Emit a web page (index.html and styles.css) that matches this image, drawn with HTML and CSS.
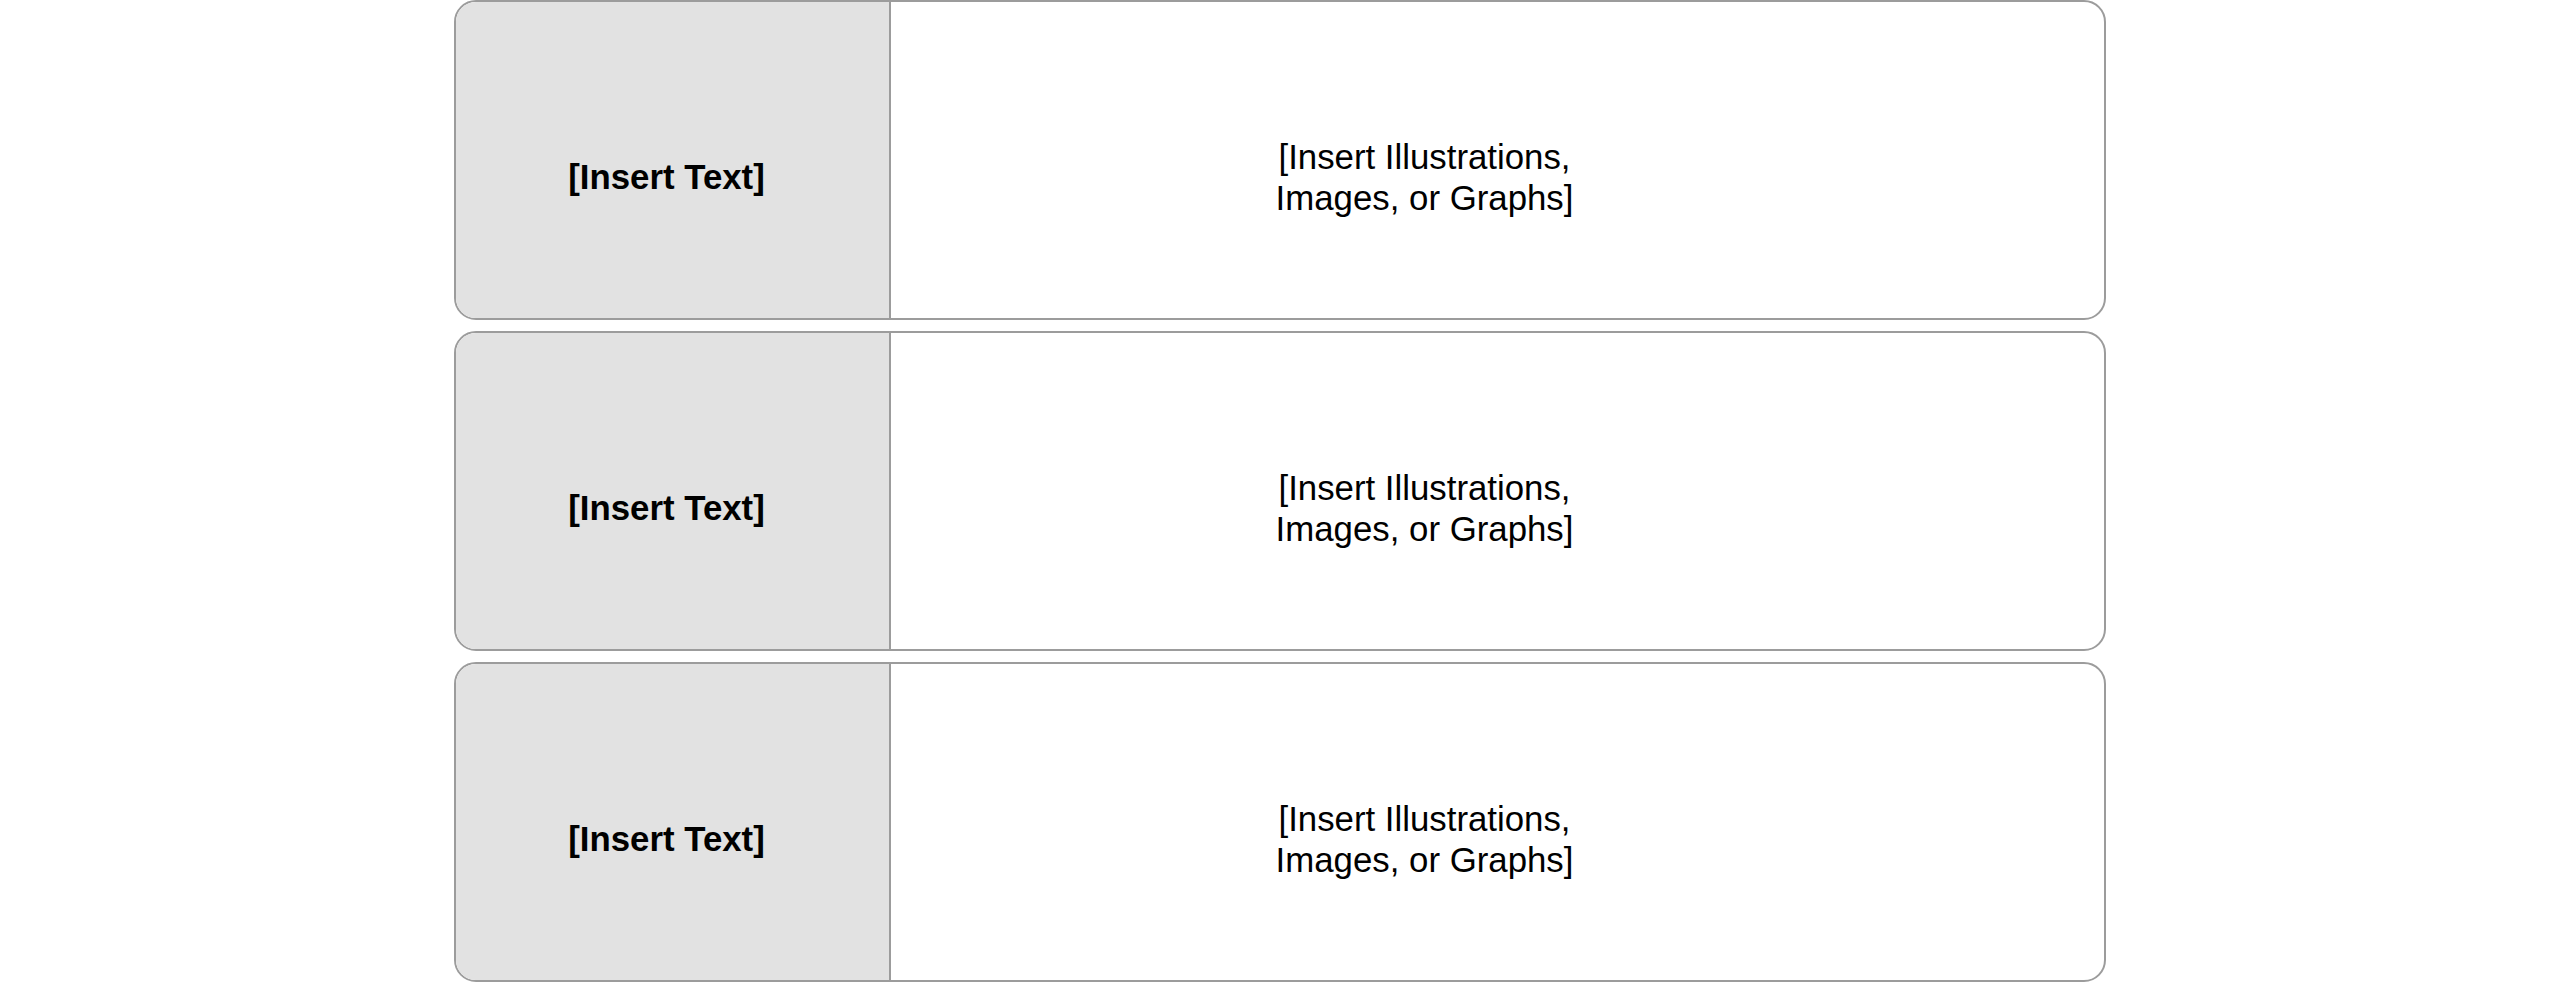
FILE: index.html
```html
<!DOCTYPE html>
<html lang="en">
<head>
<meta charset="utf-8">
<title>Layout</title>
<link rel="stylesheet" href="styles.css">
</head>
<body>
<main class="stack">
  <section class="card">
    <div class="label"><span>[Insert Text]</span></div>
    <div class="media"><p>[Insert Illustrations,<br>Images, or Graphs]</p></div>
  </section>
  <section class="card">
    <div class="label"><span>[Insert Text]</span></div>
    <div class="media"><p>[Insert Illustrations,<br>Images, or Graphs]</p></div>
  </section>
  <section class="card">
    <div class="label"><span>[Insert Text]</span></div>
    <div class="media"><p>[Insert Illustrations,<br>Images, or Graphs]</p></div>
  </section>
</main>
</body>
</html>
```
FILE: styles.css
```css
html, body {
  margin: 0;
  padding: 0;
  background: #ffffff;
}
body {
  font-family: "Liberation Sans", Arial, sans-serif;
  color: #000;
}
.stack {
  width: 1652px;
  margin: 0 auto;
  display: flex;
  flex-direction: column;
  gap: 11px;
}
.card {
  box-sizing: border-box;
  height: 320px;
  border: 2px solid #9c9c9c;
  border-radius: 22px;
  overflow: hidden;
  display: flex;
  background: #fff;
}
.label {
  box-sizing: border-box;
  width: 435px;
  flex: none;
  background: #e2e2e2;
  border-right: 2px solid #9c9c9c;
  display: flex;
  align-items: center;
  justify-content: center;
  padding: 33px 12px 0 0;
  font-weight: bold;
  font-size: 34.8px;
  line-height: 40px;
}
.media {
  flex: 1;
  display: flex;
  align-items: center;
  justify-content: center;
  padding: 33px 146px 0 0;
  font-size: 34.8px;
  line-height: 41px;
  text-align: center;
}
.media p {
  margin: 0;
}
```
